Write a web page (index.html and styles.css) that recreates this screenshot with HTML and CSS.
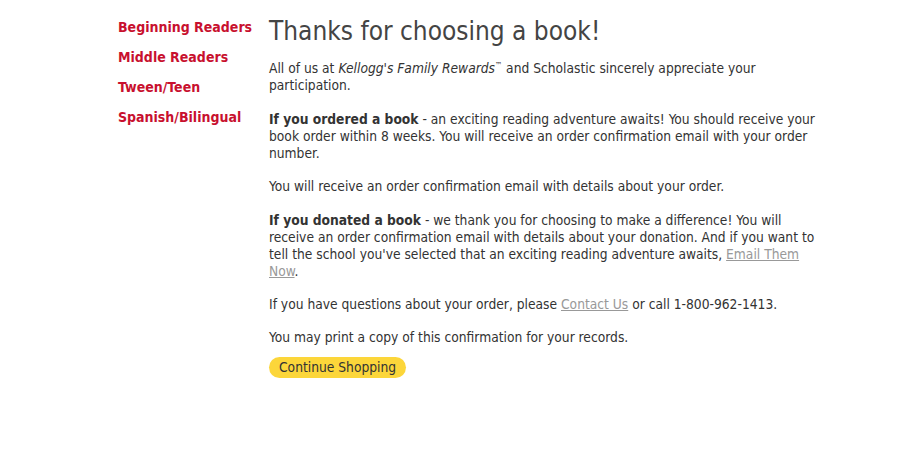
FILE: index.html
```html
<!DOCTYPE html>
<html>
<head>
<meta charset="utf-8">
<link rel="stylesheet" href="styles.css">
</head>
<body>
<div class="page">
  <nav class="side">
    <a href="#">Beginning Readers</a>
    <a href="#">Middle Readers</a>
    <a href="#">Tween/Teen</a>
    <a href="#">Spanish/Bilingual</a>
  </nav>
  <main class="content">
    <h1>Thanks for choosing a book!</h1>
    <p>All of us at <em>Kellogg's Family Rewards</em><sup class="tm">™</sup> and Scholastic sincerely appreciate your participation.</p>
    <p><strong>If you ordered a book</strong> - an exciting reading adventure awaits! You should receive your book order within 8 weeks. You will receive an order confirmation email with your order number.</p>
    <p>You will receive an order confirmation email with details about your order.</p>
    <p><strong>If you donated a book</strong> - we thank you for choosing to make a difference! You will receive an order confirmation email with details about your donation. And if you want to tell the school you've selected that an exciting reading adventure awaits, <a class="lnk" href="#">Email Them Now</a>.</p>
    <p class="q">If you have questions about your order, please <a class="lnk" href="#">Contact Us</a> or call 1-800-962-1413.</p>
    <p class="last">You may print a copy of this confirmation for your records.</p>
    <a class="btn" href="#">Continue Shopping</a>
  </main>
</div>
</body>
</html>
```
FILE: styles.css
```css
html, body { margin: 0; padding: 0; background: #fff; }
body { font-family: "DejaVu Sans Condensed", "DejaVu Sans", sans-serif; color: #333; }
.page { display: flex; padding: 16px 0 0 118px; }
.side { width: 151px; display: flex; flex-direction: column; gap: 13px; padding-top: 3px; }
.side a { color: #c8102e; font-weight: bold; font-size: 14px; line-height: 17px; text-decoration: none; }
.content { width: 555px; }
h1 { font-weight: normal; font-size: 26px; line-height: 30px; color: #444; margin: 0 0 14px; }
p { font-size: 13.7px; line-height: 17px; margin: 0 0 16.5px; }
p.q { margin-bottom: 16px; }
p.last { margin-bottom: 11px; }
.tm { font-size: 8px; vertical-align: top; line-height: 1; position: relative; top: 2px; }
.lnk { color: #999; text-decoration: underline; }
.btn { display: inline-block; background: #fcd63a; color: #333; font-size: 13.7px; line-height: 21px; padding: 0 10px; border-radius: 11px; text-decoration: none; }
```
